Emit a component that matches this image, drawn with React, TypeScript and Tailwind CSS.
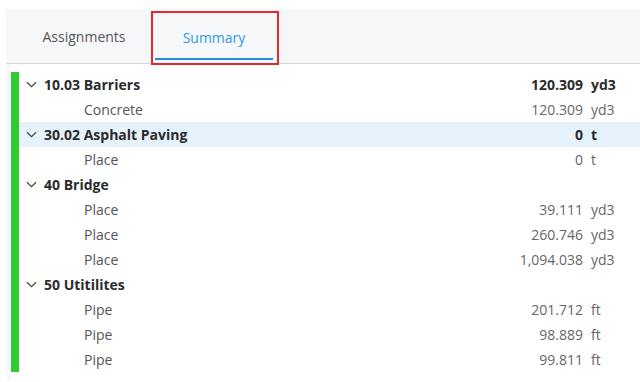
import React from 'react';

type Row = { label: string; qty: string; unit: string; group?: boolean; active?: boolean };

const rows: Row[] = [
  { label: '10.03 Barriers', qty: '120.309', unit: 'yd3', group: true },
  { label: 'Concrete', qty: '120.309', unit: 'yd3' },
  { label: '30.02 Asphalt Paving', qty: '0', unit: 't', group: true, active: true },
  { label: 'Place', qty: '0', unit: 't' },
  { label: '40 Bridge', qty: '', unit: '', group: true },
  { label: 'Place', qty: '39.111', unit: 'yd3' },
  { label: 'Place', qty: '260.746', unit: 'yd3' },
  { label: 'Place', qty: '1,094.038', unit: 'yd3' },
  { label: '50 Utitilites', qty: '', unit: '', group: true },
  { label: 'Pipe', qty: '201.712', unit: 'ft' },
  { label: 'Pipe', qty: '98.889', unit: 'ft' },
  { label: 'Pipe', qty: '99.811', unit: 'ft' },
];

function Chevron() {
  return (
    <svg width="11" height="7" viewBox="0 0 11 7" className="shrink-0">
      <path d="M1 1.2 L5.5 5.6 L10 1.2" fill="none" stroke="#444" strokeWidth="1.2" />
    </svg>
  );
}

export default function App() {
  return (
    <div className="w-[640px] h-[382px] bg-white pt-[9px] pl-[6px] overflow-hidden" style={{ fontFamily: '"Open Sans", sans-serif' }}>
      <div className="bg-[#f6f7f9] h-[370px] flex flex-col">
        {/* Tabs */}
        <div className="relative h-[55px] flex items-end border-b border-[#d3d6da] pl-[7px]">
          <div className="w-[142px] h-[54px] pt-[1px] flex items-center justify-center text-[14px] text-[#555]">Assignments</div>
          <div className="w-[118px] h-[51px] pt-[7px] flex items-center justify-center text-[14px] text-[#2e9ae0] border-b-2 border-[#1e8ee0] mb-[3px]">
            Summary
          </div>
          {/* highlight box */}
          <div className="absolute left-[145px] top-[2px] w-[128px] h-[54px] border-2 border-[#e8262c]" />
        </div>

        {/* Body */}
        <div className="flex-1 ml-[5px] bg-white pt-[8px]">
          <div className="flex">
            <div className="w-[8px] bg-[#2ecc2e]" />
            <div className="flex-1">
              {rows.map((r, i) => (
                <div
                  key={i}
                  className={`h-[25px] flex items-center text-[14px] ${r.active ? 'bg-[#e6f2fb]' : ''}`}
                >
                  {r.group ? (
                    <div className="flex items-center gap-[7px] pl-[7px] flex-1 font-bold text-[#2b2b2b]">
                      <Chevron />
                      <span>{r.label}</span>
                    </div>
                  ) : (
                    <div className="pl-[65px] flex-1 text-[#555]">{r.label}</div>
                  )}
                  <div className={`w-[140px] text-right pr-[8px] ${r.group ? 'font-bold text-[#2b2b2b]' : 'text-[#666]'}`}>{r.qty}</div>
                  <div className={`w-[49px] ${r.group ? 'font-bold text-[#2b2b2b]' : 'text-[#666]'}`}>{r.unit}</div>
                </div>
              ))}
            </div>
          </div>
        </div>
      </div>
    </div>
  );
}
